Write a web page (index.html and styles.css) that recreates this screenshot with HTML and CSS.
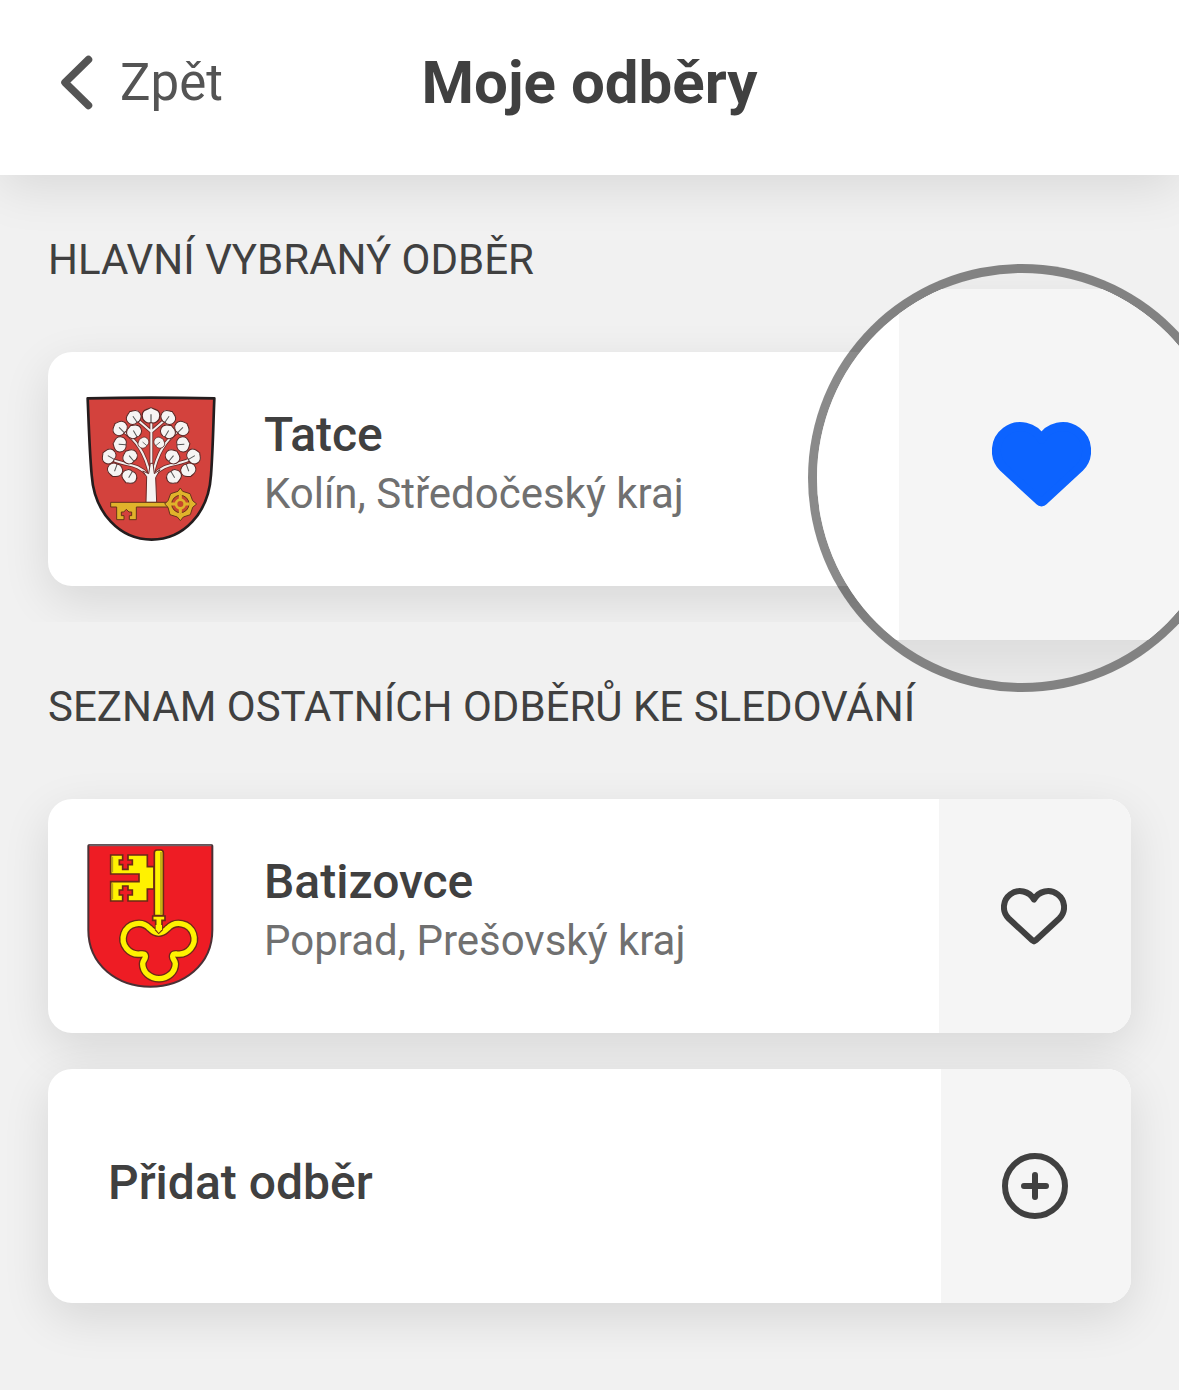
FILE: index.html
```html
<!DOCTYPE html>
<html lang="cs">
<head>
    <meta charset="UTF-8">
    <meta name="viewport" content="width=device-width, initial-scale=1.0">
    <title>Moje odběry</title>
    <link rel="stylesheet" href="styles.css">
</head>
<body>
    <!-- Header -->
    <header class="topbar">
        <a class="back" href="#">
            <svg class="back-icon" viewBox="0 0 36 58" aria-hidden="true">
                <path d="M30.500 5.500 L7 28.500 L30.500 51.500"/>
            </svg>
            Zpět
        </a>
        <h1 class="title">Moje odběry</h1>
    </header>

    <main>
        <!-- Main subscription -->
        <section class="group">
            <h2 class="group-title">Hlavní vybraný odběr</h2>
            <div class="card">
                <div class="card-body">
                    <svg class="crest" viewBox="48 33 390 438" aria-hidden="true">
                        <defs>
                            <g id="leaf">
                                <path d="M0 -21 C7 -16 23 -18 23 0 C23 14 9 22 0 18 C-9 22 -23 14 -23 0 C-23 -18 -7 -16 0 -21Z" fill="#f6f4f3" stroke="#5a2523" stroke-width="3"/>
                                <path d="M0 -4 V18" stroke="#555" stroke-width="3"/>
                            </g>
                        </defs>
                        <path d="M53 40 Q243 36 433 40 C430 110 429 190 423 270 C416 385 340 464 245 464 C150 464 73 385 65 270 C58 190 56 110 53 40Z" fill="#d3423d" stroke="#241d1e" stroke-width="8" stroke-linejoin="round"/>
                        <!-- branches -->
                        <g fill="none" stroke="#6b2a28" stroke-width="11" stroke-linecap="round">
                            <path d="M244 270 V105 M240 270 C226 205 200 165 155 135 M248 270 C262 205 285 165 330 135 M233 270 C200 230 160 245 115 218 M253 270 C285 230 325 245 370 218 M244 140 L200 102 M244 140 L288 102"/>
                        </g>
                        <g fill="none" stroke="#f3efee" stroke-width="6" stroke-linecap="round">
                            <path d="M244 270 V105 M240 270 C226 205 200 165 155 135 M248 270 C262 205 285 165 330 135 M233 270 C200 230 160 245 115 218 M253 270 C285 230 325 245 370 218 M244 140 L200 102 M244 140 L288 102"/>
                        </g>
                        <path d="M228 352 L230 275 L218 258 L236 266 L241 235 L249 235 L253 266 L270 254 L257 278 L260 352Z" fill="#f6f4f3" stroke="#6b2a28" stroke-width="3"/>
                        <!-- leaves -->
                        <use href="#leaf" transform="translate(243 92) scale(1.150)"/>
                        <use href="#leaf" transform="translate(191 97) rotate(-35)"/>
                        <use href="#leaf" transform="translate(295 97) rotate(35)"/>
                        <use href="#leaf" transform="translate(150 130) rotate(-45)"/>
                        <use href="#leaf" transform="translate(336 130) rotate(45)"/>
                        <use href="#leaf" transform="translate(192 140) rotate(-30)"/>
                        <use href="#leaf" transform="translate(294 140) rotate(30)"/>
                        <use href="#leaf" transform="translate(150 178) rotate(-85)"/>
                        <use href="#leaf" transform="translate(339 178) rotate(85)"/>
                        <use href="#leaf" transform="translate(220 173) rotate(-50) scale(0.750)"/>
                        <use href="#leaf" transform="translate(268 173) rotate(50) scale(0.750)"/>
                        <use href="#leaf" transform="translate(117 214) rotate(-60)"/>
                        <use href="#leaf" transform="translate(371 214) rotate(60)"/>
                        <use href="#leaf" transform="translate(180 215) rotate(-40)"/>
                        <use href="#leaf" transform="translate(308 215) rotate(40)"/>
                        <use href="#leaf" transform="translate(135 255) rotate(-160)"/>
                        <use href="#leaf" transform="translate(355 255) rotate(160)"/>
                        <use href="#leaf" transform="translate(178 275) rotate(-150)"/>
                        <use href="#leaf" transform="translate(312 275) rotate(150)"/>
                        <!-- golden key -->
                        <g stroke="#67321b" stroke-width="3" fill="#e0b32b">
                            <path d="M122 352 H295 V366 H199 V404 H178 V392 H185 V381 H177 L169 373 L161 381 H154 V392 H162 V404 H140 V366 H122Z"/>
                            <path d="M331 309 L338 319 L360 326 L368 347 L380 357 L368 367 L361 389 L340 396 L331 407 L322 396 L300 389 L294 367 L284 357 L294 347 L302 326 L324 319Z"/>
                        </g>
                        <circle cx="331" cy="357" r="26" fill="#c7472d" stroke="#67321b" stroke-width="3"/>
                        <path d="M331 329 V385 M303 357 H359" stroke="#e0b32b" stroke-width="9"/>
                        <circle cx="331" cy="357" r="13" fill="#c7472d" stroke="#e0b32b" stroke-width="8"/>
                    </svg>
                    <div class="place">
                        <div class="name">Tatce</div>
                        <div class="region">Kolín, Středočeský kraj</div>
                    </div>
                </div>
            </div>
            <!-- Magnified favourite button -->
            <div class="lens">
                <div class="lens-card">
                    <button class="lens-action" type="button" aria-label="Hlavní odběr" aria-pressed="true">
                        <svg class="lens-heart" viewBox="0 0 66 57" aria-hidden="true">
                            <path d="M33 11.500 A16 16 0 1 0 7.700 30.500 L31.500 52.500 Q33 54 34.500 52.500 L58.300 30.500 A16 16 0 1 0 33 11.500Z"/>
                        </svg>
                    </button>
                </div>
            </div>
        </section>

        <!-- Other subscriptions -->
        <section class="group">
            <h2 class="group-title">Seznam ostatních odběrů ke sledování</h2>
            <div class="card">
                <div class="card-body">
                    <svg class="crest" viewBox="48 39 390 438" aria-hidden="true">
                        <path d="M55 49 Q55 45 60 45 H422 Q427 45 427 49 V300 C427 405 340 470 241 470 C142 470 55 405 55 300Z" fill="#ee1c24" stroke="#4b3035" stroke-width="6"/>
                        <path d="M58 46 H424" stroke="#6d6266" stroke-width="6"/>
                        <!-- bow of the key -->
                        <path d="M266 309 C251 309 248 303 239 295 A46 46 0 1 0 212 372 C220 371 226 372 226 380 C226 388 218 392 218 401 A49 45 0 0 0 316 401 C316 392 308 388 308 380 C308 372 314 371 320 372 A46 46 0 1 0 293 295 C284 303 281 309 266 309Z" fill="none" stroke="#6c2917" stroke-width="24"/>
                        <path d="M266 309 C251 309 248 303 239 295 A46 46 0 1 0 212 372 C220 371 226 372 226 380 C226 388 218 392 218 401 A49 45 0 0 0 316 401 C316 392 308 388 308 380 C308 372 314 371 320 372 A46 46 0 1 0 293 295 C284 303 281 309 266 309Z" fill="none" stroke="#fff200" stroke-width="16"/>
                        <!-- bit and stem -->
                        <g fill="#fff200" stroke="#6c2917" stroke-width="5">
                            <path d="M122 75 H158 V90 H148 V104 H158 V118 H174 V104 H187 V90 H174 V75 H232 V110 H252 V177 H232 V213 H174 V195 H187 V180 H174 V168 H158 V180 H148 V195 H158 V213 H122 V155 H207 V132 H122Z"/>
                            <path d="M253 68 Q253 60 261 60 H272 Q280 60 280 68 V257 H253Z"/>
                            <path d="M248 258 H285 V271 H276 V300 L266 309 L257 300 V271 H248Z"/>
                        </g>
                        <path d="M257 298 L266 309 L276 298 V285 H257Z" fill="#fff200"/>
                        <path d="M273 66 V254 M127 80 V127 M127 160 V208" stroke="#b9a51c" stroke-width="5"/>
                    </svg>
                    <div class="place">
                        <div class="name">Batizovce</div>
                        <div class="region">Poprad, Prešovský kraj</div>
                    </div>
                </div>
                <button class="action" type="button" aria-label="Nastavit jako hlavní odběr">
                    <svg class="heart" viewBox="0 0 66 57" aria-hidden="true">
                        <path d="M33 11.500 A16 16 0 1 0 7.700 30.500 L31.500 52.500 Q33 54 34.500 52.500 L58.300 30.500 A16 16 0 1 0 33 11.500Z"/>
                    </svg>
                </button>
            </div>
            <button class="card add" type="button">
                <span class="card-body">
                    <span class="name">Přidat odběr</span>
                </span>
                <span class="action">
                    <svg class="plus" viewBox="0 0 66 66" aria-hidden="true">
                        <circle cx="33" cy="33" r="30"/>
                        <path d="M33 22 V44 M22 33 H44"/>
                    </svg>
                </span>
            </button>
        </section>
    </main>
</body>
</html>
```
FILE: styles.css
```css
/* General Styling */
* {
    box-sizing: border-box;
}
body {
    margin: 0;
    min-height: 100vh;
    background: #f1f1f1;
    color: #404040;
    font-family: Roboto, sans-serif;
    overflow-x: hidden;
}
svg {
    display: block;
    flex: none;
}
button {
    border: none;
    padding: 0;
    color: inherit;
    font-family: inherit;
    text-align: left;
    cursor: pointer;
}

/* Header */
.topbar {
    position: relative;
    z-index: 1;
    display: grid;
    grid-template-columns: 1fr auto 1fr;
    align-items: center;
    height: 175px;
    padding: 0 58px 10px;
    background: #ffffff;
    box-shadow: 0 12px 48px rgba(0, 0, 0, 0.1);
}
.back {
    display: flex;
    align-items: center;
    gap: 26px;
    color: #545454;
    font-size: 51px;
    line-height: 58px;
    text-decoration: none;
}
.back-icon {
    width: 36px;
    height: 58px;
    fill: none;
    stroke: #545454;
    stroke-width: 7.5;
    stroke-linecap: round;
    stroke-linejoin: round;
}
.title {
    margin: 0;
    font-size: 60px;
    line-height: 72px;
    font-weight: bold;
}

/* Groups */
.group {
    position: relative;
    display: flow-root;
    background: #f1f1f1;
}
.group:last-child {
    padding-bottom: 48px;
}
.group-title {
    margin: 0;
    padding: 60px 48px 67px;
    font-size: 42px;
    line-height: 50px;
    font-weight: normal;
    text-transform: uppercase;
}

/* Cards */
.card {
    display: flex;
    height: 234px;
    margin: 0 48px 36px;
    border-radius: 24px;
    background: #ffffff;
    box-shadow: 0 15px 48px rgba(0, 0, 0, 0.11);
}
.card:last-child {
    margin-bottom: 0;
}
.group:first-child {
    padding-bottom: 36px;
}
.group:first-child .card {
    margin-bottom: 0;
}
.card-body {
    flex: 1;
    display: flex;
    align-items: center;
    gap: 48px;
    padding-left: 38px;
}
.crest {
    width: 130px;
    height: 146px;
}
.place {
    padding-bottom: 10px;
}
.name {
    font-size: 48px;
    line-height: 60px;
    font-weight: 500;
}
.region {
    color: #707070;
    font-size: 42px;
    line-height: 58px;
}
.action {
    display: flex;
    align-items: center;
    justify-content: center;
    width: 192px;
    padding-right: 2px;
    border-radius: 0 24px 24px 0;
    background: #f5f5f5;
}
.heart,
.plus {
    width: 66px;
    fill: none;
    stroke: #404040;
    stroke-width: 6;
    stroke-linecap: round;
    stroke-linejoin: round;
}
.add {
    width: calc(100% - 96px);
}
.add .card-body {
    height: 100%;
    padding: 0 0 6px 60px;
}
.add .action {
    height: 100%;
    width: 190px;
}

/* Magnifier over the favourite button */
.lens {
    position: absolute;
    z-index: 2;
    top: 89px;
    right: -57px;
    width: 428px;
    height: 428px;
    padding-top: 16px;
    border: 9px solid rgba(0, 0, 0, 0.46);
    border-radius: 50%;
    background: #f1f1f1;
    background-clip: padding-box;
    overflow: hidden;
}
.lens-card {
    height: 351px;
    padding-left: 82px;
    background: #ffffff;
    box-shadow: 0 22px 72px rgba(0, 0, 0, 0.11);
}
.lens-action {
    display: flex;
    align-items: center;
    width: 100%;
    height: 100%;
    padding-left: 93px;
    background: #f5f5f5;
}
.lens-heart {
    width: 99px;
    fill: #0c63ff;
    stroke: #0c63ff;
    stroke-width: 6;
    stroke-linejoin: round;
}
```
